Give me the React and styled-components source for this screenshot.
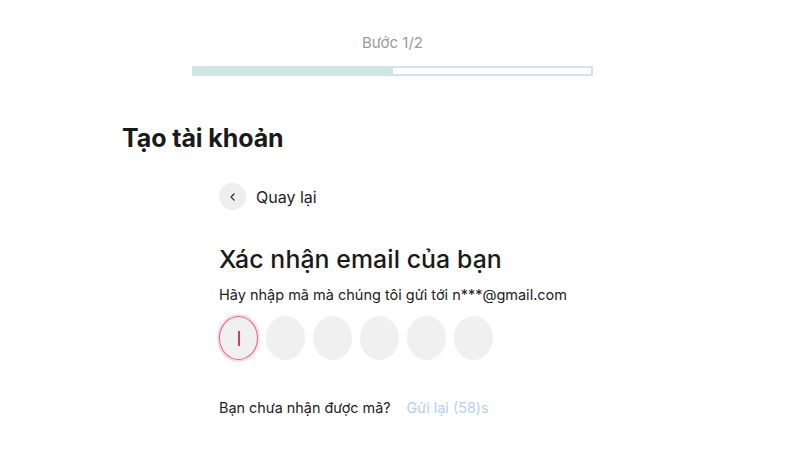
import React from 'react'
import styled, { createGlobalStyle } from 'styled-components'

const GlobalStyle = createGlobalStyle`
    body {
        margin: 0;
        background: #ffffff;
        font-family: Inter, "Noto Sans", sans-serif;
        color: #1a1a1a;
    }
`

const Page = styled.div`
    width: 800px;
    height: 450px;
    display: flex;
    flex-direction: column;
    overflow: hidden;
`

const StepHeader = styled.div`
    display: flex;
    flex-direction: column;
    align-items: center;
    padding-top: 33px;
    padding-right: 15px;
`

const StepLabel = styled.div`
    font-size: 15px;
    line-height: 20px;
    color: #9a9a9a;
`

const ProgressTrack = styled.div`
    margin-top: 13px;
    width: 401px;
    height: 10px;
    box-sizing: border-box;
    border: 2px solid #cfe5e3;
    background: #ffffff;
    display: flex;
`

const ProgressFill = styled.div`
    background: #cfe5e3;
    height: 100%;
`

const Title = styled.h1`
    margin: 47px 0 0 122px;
    font-size: 25px;
    line-height: 30px;
    font-weight: 700;
    letter-spacing: -0.1px;
`

const Form = styled.div`
    margin-left: 219px;
    display: flex;
    flex-direction: column;
`

const BackRow = styled.div`
    margin-top: 30px;
    display: flex;
    align-items: center;
    gap: 10px;
    font-size: 16px;
    color: #222;
`

const BackCircle = styled.div`
    width: 27px;
    height: 27px;
    border-radius: 50%;
    background: #eeeeee;
    display: flex;
    align-items: center;
    justify-content: center;
`

const Heading = styled.h2`
    margin: 34px 0 0;
    font-size: 24.8px;
    line-height: 30px;
    font-weight: 500;
    letter-spacing: 0.1px;
`

const Hint = styled.p`
    margin: 12px 0 0;
    font-size: 14.5px;
    line-height: 18px;
    color: #222;
`

const CodeRow = styled.div`
    margin-top: 12px;
    display: flex;
    gap: 8px;
`

const CodeBox = styled.div`
    width: 39px;
    height: 44px;
    box-sizing: border-box;
    border-radius: 50%;
    background: #f0f0f0;
    display: flex;
    align-items: center;
    justify-content: center;
    border: ${p => (p.$active ? '1.5px solid #e0678f' : 'none')};
    box-shadow: ${p => (p.$active ? '0 0 0 2px #fbdbe6' : 'none')};
`

const Caret = styled.div`
    width: 2px;
    height: 15px;
    background: #d23c73;
`

const Resend = styled.div`
    margin-top: 39px;
    display: flex;
    gap: 16px;
    font-size: 14.4px;
    line-height: 18px;
    color: #222;
`

const ResendLink = styled.span`
    color: #b9cdee;
`

export default function App() {
    const steps = 2
    const current = 1

    return (
        <Page>
            <GlobalStyle />
            <StepHeader>
                <StepLabel>Bước {current}/{steps}</StepLabel>
                <ProgressTrack>
                    <ProgressFill style={{ width: `${(current / steps) * 100}%` }} />
                </ProgressTrack>
            </StepHeader>
            <Title>Tạo tài khoản</Title>
            <Form>
                <BackRow>
                    <BackCircle>
                        <svg width="10" height="10" viewBox="0 0 10 10">
                            <path d="M6 2 L3 5 L6 8" fill="none" stroke="#333" strokeWidth="1.4" strokeLinecap="round" strokeLinejoin="round" />
                        </svg>
                    </BackCircle>
                    Quay lại
                </BackRow>
                <Heading>Xác nhận email của bạn</Heading>
                <Hint>Hãy nhập mã mà chúng tôi gửi tới n***@gmail.com</Hint>
                <CodeRow>
                    {[0, 1, 2, 3, 4, 5].map(i => (
                        <CodeBox key={i} $active={i === 0}>
                            {i === 0 && <Caret />}
                        </CodeBox>
                    ))}
                </CodeRow>
                <Resend>
                    <span>Bạn chưa nhận được mã?</span>
                    <ResendLink>Gửi lại (58)s</ResendLink>
                </Resend>
            </Form>
        </Page>
    )
}
